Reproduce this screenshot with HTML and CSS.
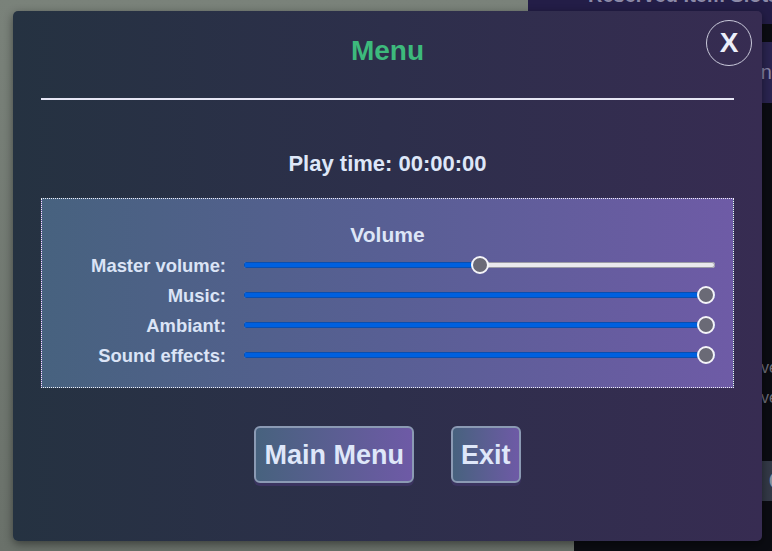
FILE: index.html
```html
<!DOCTYPE html>
<html>
<head>
<meta charset="utf-8">
<link rel="stylesheet" href="styles.css">
</head>
<body>
<div class="page">
  <div class="page-main"></div>
  <aside class="sidebar">
    <div class="side-head"><span class="side-head-text">Reserved Item Slots</span></div>
    <div class="side-btn">Open</div>
    <div class="side-list">
      <div class="side-item">Save</div>
      <div class="side-item">Save</div>
    </div>
    <div class="side-tool">C</div>
  </aside>
</div>

<div class="modal">
  <button class="close">X</button>
  <h1 class="title">Menu</h1>
  <hr class="rule">
  <p class="playtime">Play time: 00:00:00</p>
  <section class="volume">
    <h2 class="volume-title">Volume</h2>
    <div class="vol-grid">
      <div class="vol-label">Master volume:</div>
      <div class="slider">
        <div class="track"><div class="fill" style="width: calc(9px + (100% - 18px) * 0.5)"></div></div>
        <div class="thumb" style="left: calc((100% - 18px) * 0.5)"></div>
      </div>
      <div class="vol-label">Music:</div>
      <div class="slider">
        <div class="track"><div class="fill" style="width: 100%"></div></div>
        <div class="thumb" style="left: calc(100% - 18px)"></div>
      </div>
      <div class="vol-label">Ambiant:</div>
      <div class="slider">
        <div class="track"><div class="fill" style="width: 100%"></div></div>
        <div class="thumb" style="left: calc(100% - 18px)"></div>
      </div>
      <div class="vol-label">Sound effects:</div>
      <div class="slider">
        <div class="track"><div class="fill" style="width: 100%"></div></div>
        <div class="thumb" style="left: calc(100% - 18px)"></div>
      </div>
    </div>
  </section>
  <div class="actions">
    <button class="btn">Main Menu</button>
    <button class="btn">Exit</button>
  </div>
</div>
</body>
</html>
```

FILE: styles.css
```css
* { box-sizing: border-box; }
html, body {
  margin: 0;
  padding: 0;
  width: 772px;
  height: 551px;
  overflow: hidden;
  font-family: "Liberation Sans", Arial, sans-serif;
}
.page {
  display: flex;
  height: 551px;
  background: #5f655f;
}
.page-main {
  flex: none;
  width: 574px;
  background: linear-gradient(180deg, #7a827a 0%, #6a716a 100%);
}
.sidebar {
  flex: 1;
  min-width: 0;
  background: #0b0c12;
  display: flex;
  flex-direction: column;
}
.side-head {
  margin-left: -46px;
  height: 24px;
  background: #231d47;
  color: #8c8aa8;
  font-weight: bold;
  font-size: 20px;
  padding-left: 60px;
  overflow: hidden;
  white-space: nowrap;
}
.side-head-text {
  display: block;
  margin-top: -16px;
  line-height: 23px;
}
.side-btn {
  margin-top: 18px;
  height: 61px;
  background: #2a2450;
  color: #8886a6;
  font-size: 20px;
  display: flex;
  align-items: center;
  justify-content: flex-end;
  padding-right: 2px;
  margin-right: -2px;
}
.side-list {
  margin-top: 255px;
  display: flex;
  flex-direction: column;
  gap: 11px;
}
.side-item {
  color: #6e6e7a;
  font-size: 16px;
  line-height: 19px;
  text-align: right;
  margin-right: -6px;
}
.side-tool {
  margin-top: 54px;
  height: 40px;
  background: linear-gradient(90deg, #2a2f3c, #343a48);
  color: #8b93a0;
  font-size: 24px;
  font-weight: bold;
  display: flex;
  align-items: center;
  justify-content: flex-end;
  margin-right: -14px;
}

.modal {
  position: absolute;
  left: 13px;
  top: 11px;
  width: 749px;
  height: 530px;
  border-radius: 5px;
  background: linear-gradient(90deg, #253241 0%, #2d2f4b 50%, #372c52 100%);
  box-shadow: 0 3px 10px rgba(0, 0, 0, 0.45);
  padding: 0 28px;
  display: flex;
  flex-direction: column;
  color: #dde6f7;
}
.close {
  position: absolute;
  top: 9px;
  right: 10px;
  width: 46px;
  height: 46px;
  border-radius: 50%;
  border: 1px solid #c9c9da;
  background: transparent;
  color: #eceffa;
  font-family: "Liberation Sans", Arial, sans-serif;
  font-weight: bold;
  font-size: 28px;
  line-height: 28px;
  padding: 0;
  display: flex;
  align-items: center;
  justify-content: center;
}
.title {
  margin: 24px 0 0;
  font-size: 28px;
  line-height: 32px;
  font-weight: bold;
  text-align: center;
  color: #3dba7c;
}
.rule {
  margin: 31px 0 0;
  border: 0;
  height: 2px;
  background: #e6e6f4;
}
.playtime {
  margin: 51px 0 0;
  font-size: 22px;
  line-height: 26px;
  font-weight: bold;
  text-align: center;
  color: #dee7f8;
}
.volume {
  margin-top: 21px;
  border: 1px dotted #f0f0f8;
  background: linear-gradient(90deg, #47627f 0%, #585f94 50%, #6e5ba6 100%);
  padding: 24px 0 16px 0;
}
.volume-title {
  margin: 0;
  font-size: 21px;
  line-height: 24px;
  font-weight: bold;
  text-align: center;
  color: #dde6f7;
}
.vol-grid {
  margin-top: 4px;
  padding-right: 18px;
  display: grid;
  grid-template-columns: 184px 1fr;
  column-gap: 18px;
  grid-auto-rows: 30px;
  align-items: center;
}
.vol-label {
  font-size: 18.4px;
  line-height: 30px;
  font-weight: bold;
  text-align: right;
  color: #dbe4f6;
}
.slider {
  position: relative;
  height: 18px;
  display: flex;
  align-items: center;
  top: -1px;
}
.track {
  width: 100%;
  height: 6px;
  border-radius: 3px;
  background: #e9e9ed;
  box-shadow: inset 0 0 0 1px #9a9aa6;
  overflow: hidden;
}
.fill {
  height: 100%;
  background: #0060df;
  box-shadow: inset 0 0 0 1px #0a4fb0;
}
.thumb {
  position: absolute;
  top: 0;
  width: 18px;
  height: 18px;
  border-radius: 50%;
  background: #6a6a76;
  border: 2px solid #f4f4f8;
}
.actions {
  margin-top: 38px;
  display: flex;
  justify-content: center;
  gap: 37px;
}
.btn {
  font-family: "Liberation Sans", Arial, sans-serif;
  font-size: 27px;
  line-height: 31px;
  font-weight: bold;
  color: #dfe7f9;
  padding: 12px 8px 10px;
  border: 2px solid #8b9ab4;
  border-radius: 6px;
  background: linear-gradient(90deg, #47627e 0%, #6e5aa6 100%);
  box-shadow: 0 3px 0 #3b3460;
}
```
